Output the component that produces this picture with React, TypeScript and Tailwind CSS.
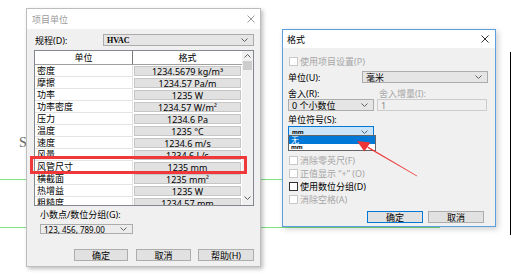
import React from 'react';

const rows: [string, string][] = [
  ['密度', '1234.5679 kg/m³'],
  ['摩擦', '1234.57 Pa/m'],
  ['功率', '1235 W'],
  ['功率密度', '1234.57 W/m²'],
  ['压力', '1234.6 Pa'],
  ['温度', '1235 °C'],
  ['速度', '1234.6 m/s'],
  ['风量', '1234.6 L/s'],
  ['风管尺寸', '1235 mm'],
  ['横截面', '1235 mm²'],
  ['热增益', '1235 W'],
  ['粗糙度', '1234.57 mm'],
];

function Chevron({ up = false, color = '#606060' }: { up?: boolean; color?: string }) {
  return (
    <svg width="7" height="4" viewBox="0 0 7 4" className="shrink-0">
      <path
        d={up ? 'M0.5 3.5L3.5 0.5L6.5 3.5' : 'M0.5 0.5L3.5 3.5L6.5 0.5'}
        fill="none"
        stroke={color}
        strokeWidth="1"
      />
    </svg>
  );
}

function CloseX({ color }: { color: string }) {
  return (
    <svg width="8" height="8" viewBox="0 0 8 8">
      <path d="M0.5 0.5L7.5 7.5M7.5 0.5L0.5 7.5" stroke={color} strokeWidth="1" />
    </svg>
  );
}

function Select({ value, className = '' }: { value: React.ReactNode; className?: string }) {
  return (
    <div
      className={`flex items-center justify-between border border-[#acacac] bg-[#e5e5e5] pl-[3px] pr-[5px] ${className}`}
    >
      <span className="leading-none">{value}</span>
      <Chevron />
    </div>
  );
}

function Button({ label, className = '' }: { label: string; className?: string }) {
  return (
    <div
      className={`flex h-[12px] items-center justify-center border border-[#adadad] bg-[#e1e1e1] leading-none ${className}`}
    >
      {label}
    </div>
  );
}

function Check({ label, disabled = false }: { label: string; disabled?: boolean }) {
  return (
    <div className="flex h-[13px] items-center gap-[2px]">
      <span
        className={`ml-[1px] h-[9px] w-[9px] border bg-white ${disabled ? 'border-[#c8c8c8]' : 'border-[#333333]'}`}
      />
      <span className={`leading-none ${disabled ? 'text-[#a6a6a6]' : 'text-black'}`}>{label}</span>
    </div>
  );
}

function UnitsDialog() {
  return (
    <div className="absolute left-[26px] top-[8px] flex h-[259px] w-[235px] flex-col border border-[#bdbdbd] bg-[#f0f0f0] shadow-[2px_2px_4px_rgba(0,0,0,0.25)]">
      <div className="flex h-[20px] items-center justify-between bg-white pl-[5px] pr-[5px] text-[#9a9a9a]">
        <span className="leading-none">项目单位</span>
        <CloseX color="#9a9a9a" />
      </div>

      <div className="mt-[5px] flex h-[12px] items-center pl-[8px]">
        <span className="w-[68px] leading-none">规程(D):</span>
        <Select
          value={<span className="font-['Liberation_Serif',serif] text-[8px] font-bold">HVAC</span>}
          className="h-[12px] w-[151px]"
        />
      </div>

      <div className="ml-[7px] mt-[4px] flex h-[156px] w-[220px] overflow-hidden border border-[#828790] bg-white">
        <div className="flex w-[207px] flex-col">
          <div className="flex h-[14px] shrink-0 border-b border-[#a0a0a0]">
            <div className="flex w-[98px] items-center justify-center border-r border-[#7a7a7a] leading-none">
              单位
            </div>
            <div className="flex flex-1 items-center justify-center leading-none">格式</div>
          </div>
          {rows.map(([name, fmt]) => (
            <div key={name} className="flex h-[12px] shrink-0">
              <div className="flex w-[98px] items-center border-b border-r border-[#e3e3e3] pl-[2px] leading-none">
                {name}
              </div>
              <div className="flex flex-1 p-[1px]">
                <div className="flex flex-1 items-center justify-center border border-[#c6c6c6] bg-[#e1e1e1] leading-none">
                  {fmt}
                </div>
              </div>
            </div>
          ))}
        </div>
        <div className="flex w-[11px] flex-col items-center bg-[#f0f0f0]">
          <div className="flex h-[10px] items-center">
            <Chevron up />
          </div>
          <div className="h-[9px] w-[9px] bg-[#cdcdcd]" />
          <div className="flex-1" />
          <div className="mb-[4px] flex h-[6px] items-center">
            <Chevron />
          </div>
        </div>
      </div>

      <div className="mt-[4px] h-[10px] pl-[13px] leading-[10px]">小数点/数位分组(G):</div>
      <Select
        value={<span className="text-[8px]">123, 456, 789.00</span>}
        className="ml-[13px] mt-[4px] h-[10px] w-[93px] !bg-[#ececec]"
      />

      <div className="mt-[15px] flex gap-[7px] pl-[47px]">
        <Button label="确定" className="w-[54px]" />
        <Button label="取消" className="ml-[1px] w-[55px]" />
        <Button label="帮助(H)" className="w-[56px]" />
      </div>
    </div>
  );
}

function FormatDialog() {
  return (
    <div className="absolute left-[282px] top-[29px] flex h-[198px] w-[214px] flex-col border border-[#5b9fe0] bg-[#f0f0f0] text-[9px] shadow-[2px_2px_6px_rgba(0,0,0,0.2)]">
      <div className="flex h-[18px] shrink-0 items-center justify-between bg-white pl-[4px] pr-[6px]">
        <span className="leading-none">格式</span>
        <CloseX color="#333333" />
      </div>

      <div className="relative flex flex-1 flex-col pl-[5px]">
        <div className="mt-[7px]">
          <Check label="使用项目设置(P)" disabled />
        </div>

        <div className="mt-[3px] flex h-[12px] items-center">
          <span className="w-[74px] leading-none">单位(U):</span>
          <Select value="毫米" className="h-[12px] w-[126px]" />
        </div>

        <div className="mt-[5px] flex h-[10px] items-center">
          <span className="w-[91px] leading-none">舍入(R):</span>
          <span className="leading-none text-[#a6a6a6]">舍入增量(I):</span>
        </div>

        <div className="mt-[1px] flex h-[12px] items-center gap-[3px]">
          <Select value="0 个小数位" className="h-[12px] w-[86px]" />
          <div className="flex h-[12px] w-[110px] items-center border border-[#cccccc] bg-[#f0f0f0] pl-[3px] leading-none text-[#8a8a8a]">
            1
          </div>
        </div>

        <div className="mt-[4px] h-[10px] leading-[10px]">单位符号(S):</div>

        <div className="mt-[1px] flex h-[11px] w-[86px] items-center justify-between border border-[#0078d7] bg-[#cce4f7] pl-[3px] pr-[5px]">
          <span className="text-[6px] font-bold leading-none">mm</span>
          <Chevron />
        </div>

        <div className="mt-[17px] flex flex-col">
          <Check label="消除零英尺(F)" disabled />
          <Check label={'正值显示 “+” (O)'} disabled />
          <Check label="使用数位分组(D)" />
          <Check label="消除空格(A)" disabled />
        </div>

        <div className="mt-[5px] flex gap-[5px] pl-[79px]">
          <div className="flex h-[12px] w-[56px] items-center justify-center border-[1.5px] border-[#0078d7] bg-[#e1e1e1] leading-none">
            确定
          </div>
          <Button label="取消" className="w-[56px]" />
        </div>

        <div className="absolute left-[5px] top-[87px] flex w-[88px] flex-col border border-[#646464] bg-white">
          <div className="flex h-[8px] items-center bg-[#0078d7] pl-[2px] text-[8px] leading-none text-white">
            无
          </div>
          <div className="flex h-[6px] items-center pl-[2px] text-[6px] font-bold leading-none">mm</div>
        </div>
      </div>
    </div>
  );
}

export default function App() {
  return (
    <div className="relative h-[278px] w-[511px] overflow-hidden bg-white font-['Noto_Sans','Noto_Sans_CJK_SC',sans-serif] text-[9px] text-black">
      {/* canvas behind the dialogs */}
      <div className="absolute left-0 top-[179px] h-px w-[282px] bg-[#7fe07f]" />
      <div className="absolute left-0 top-[227px] h-px w-[440px] bg-[#7fe07f]" />
      <div className="absolute left-[19px] top-[136px] font-['Liberation_Serif',serif] text-[14px] leading-none text-[#666666]">
        S
      </div>
      <div className="absolute left-[510px] top-[52px] h-[183px] w-px bg-black" />

      <UnitsDialog />
      <FormatDialog />

      {/* annotations */}
      <div className="absolute left-[30px] top-[156px] h-[18px] w-[217px] border-[3.5px] border-[#f0383b]" />
      <svg className="pointer-events-none absolute left-0 top-0" width="511" height="278" viewBox="0 0 511 278">
        <polygon points="417.2,176.4 416.8,175.6 366.6,145.7 368.1,148.3" fill="#ee3434" />
        <polygon points="357,141 370.5,142.4 364.3,151.6" fill="#ee3434" />
      </svg>
    </div>
  );
}
